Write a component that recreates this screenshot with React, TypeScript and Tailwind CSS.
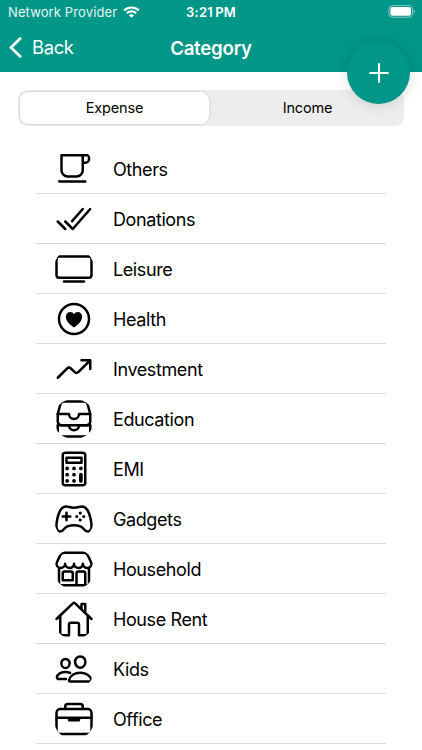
import React from 'react';
import type { IconType } from 'react-icons';
import {
  IoCafeOutline,
  IoCheckmarkDoneOutline,
  IoTvOutline,
  IoHeartCircleOutline,
  IoTrendingUpOutline,
  IoFileTrayStackedOutline,
  IoCalculatorOutline,
  IoGameControllerOutline,
  IoStorefrontOutline,
  IoHomeOutline,
  IoPeopleOutline,
  IoBriefcaseOutline,
} from 'react-icons/io5';

const categories: { name: string; Icon: IconType }[] = [
  { name: 'Others', Icon: IoCafeOutline },
  { name: 'Donations', Icon: IoCheckmarkDoneOutline },
  { name: 'Leisure', Icon: IoTvOutline },
  { name: 'Health', Icon: IoHeartCircleOutline },
  { name: 'Investment', Icon: IoTrendingUpOutline },
  { name: 'Education', Icon: IoFileTrayStackedOutline },
  { name: 'EMI', Icon: IoCalculatorOutline },
  { name: 'Gadgets', Icon: IoGameControllerOutline },
  { name: 'Household', Icon: IoStorefrontOutline },
  { name: 'House Rent', Icon: IoHomeOutline },
  { name: 'Kids', Icon: IoPeopleOutline },
  { name: 'Office', Icon: IoBriefcaseOutline },
];

function StatusBar() {
  return (
    <div className="grid h-6 grid-cols-[1fr_auto_1fr] items-center px-2">
      <div className="flex items-center gap-1.5">
        <span className="whitespace-nowrap pt-px text-[13px] tracking-[0.12px] text-white/90">Network Provider</span>
        <svg className="h-3 w-[17px]" viewBox="0 0 17 12" fill="none" stroke="white" strokeWidth="2.2">
          <path d="M1.2 4.4C5.2.5 11.8.5 15.8 4.4" />
          <path d="M3.9 7.1C6.4 4.7 10.6 4.7 13.1 7.1" />
          <path d="M6 9.2C7.4 7.9 9.6 7.9 11 9.2L8.5 11.8Z" fill="white" stroke="none" />
        </svg>
      </div>
      <span className="pt-px text-[13px] font-semibold tracking-[0.2px] [word-spacing:-1.2px]">3:21 PM</span>
      <svg className="-mr-0.5 mb-0.5 h-[13px] w-[28px] justify-self-end" viewBox="0 0 28 13" fill="none">
        <rect x="0.9" y="0.6" width="23.6" height="11.6" rx="3.4" stroke="white" strokeOpacity="0.5" />
        <rect x="2.4" y="2.1" width="20.6" height="8.6" rx="2" fill="white" />
        <path d="M25.8 4.5C27.3 5 27.3 7.8 25.8 8.3Z" fill="white" fillOpacity="0.55" />
      </svg>
    </div>
  );
}

function Header() {
  return (
    <header className="relative h-[72px] bg-[#009688] text-white">
      <StatusBar />
      <div className="grid h-[47px] grid-cols-[1fr_auto_1fr] items-center px-2">
        <button className="flex items-center gap-[10px]">
          <svg className="h-[21px] w-[14px]" viewBox="0 0 14 21" fill="none" stroke="white" strokeWidth="2.8" strokeLinecap="round" strokeLinejoin="round">
            <path d="M12.2 1.6L3 10.5L12.2 19.4" />
          </svg>
          <span className="text-[18.4px] tracking-[-0.35px]">Back</span>
        </button>
        <h1 className="pt-[3px] text-[18.7px] font-semibold tracking-[-0.25px]">Category</h1>
      </div>
      <button className="absolute left-[347px] top-[41px] flex size-[63px] items-center justify-center rounded-full bg-[#009688] shadow-[0_1px_14px_rgba(0,0,0,0.14)]">
        <svg className="size-5" viewBox="0 0 20 20" stroke="white" strokeWidth="2" strokeLinecap="round">
          <path d="M10 1.1V18.9M1.1 10H18.9" />
        </svg>
      </button>
    </header>
  );
}

export default function App() {
  return (
    <div className="h-[750px] w-[422px] overflow-hidden bg-white font-[Inter,sans-serif] text-black">
      <Header />
      <div className="ml-[18px] mt-[18px] flex h-9 w-[386px] rounded-[9px] bg-[#ededed] p-0.5 text-[14.5px] tracking-[-0.15px]">
        <button className="w-[189px] rounded-lg bg-white shadow-[0_0_3px_rgba(0,0,0,0.18)]">Expense</button>
        <button className="flex-1 pl-1">Income</button>
      </div>
      <ul className="ml-9 mt-[18px] w-[350px]">
        {categories.map(({ name, Icon }) => (
          <li key={name} className="flex h-[50px] items-center border-b border-[#dcdcdc] pl-[18px] text-[18px] tracking-[-0.4px]">
            <span className="mr-[19px] overflow-hidden rounded-[19px]">
              <Icon className="size-10" />
            </span>
            <span className="pt-0.5">{name}</span>
          </li>
        ))}
      </ul>
    </div>
  );
}
